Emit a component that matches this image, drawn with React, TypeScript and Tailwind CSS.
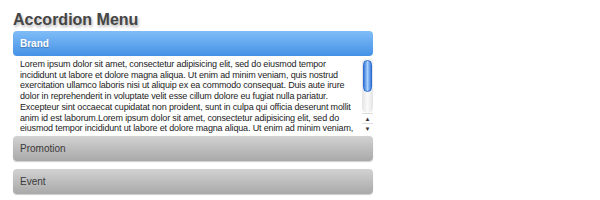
const lines = [
  "Lorem ipsum dolor sit amet, consectetur adipisicing elit, sed do eiusmod tempor",
  "incididunt ut labore et dolore magna aliqua. Ut enim ad minim veniam, quis nostrud",
  "exercitation ullamco laboris nisi ut aliquip ex ea commodo consequat. Duis aute irure",
  "dolor in reprehenderit in voluptate velit esse cillum dolore eu fugiat nulla pariatur.",
  "Excepteur sint occaecat cupidatat non proident, sunt in culpa qui officia deserunt mollit",
  "anim id est laborum.Lorem ipsum dolor sit amet, consectetur adipisicing elit, sed do",
  "eiusmod tempor incididunt ut labore et dolore magna aliqua. Ut enim ad minim veniam,",
];

function ScrollBar() {
  return (
    <div className="flex w-[11px] shrink-0 flex-col bg-white">
      <div className="flex flex-1 flex-col rounded-full bg-gradient-to-r from-[#e4e4e4] via-[#fafafa] to-[#e4e4e4] px-px pt-[2px]">
        <div className="h-[32px] rounded-full border border-[#2d6fd0] bg-gradient-to-r from-[#3b7be0] via-[#a9d0fb] to-[#3b7be0]" />
      </div>
      <div className="flex h-[10px] items-center justify-center border-t border-[#ddd] text-[6px] leading-none text-[#333]">▲</div>
      <div className="flex h-[10px] items-center justify-center border-t border-[#ddd] text-[6px] leading-none text-[#333]">▼</div>
    </div>
  );
}

function Header({ label, active }: { label: string; active?: boolean }) {
  return (
    <div
      className={
        active
          ? "flex h-[25px] items-center rounded-[4px] bg-gradient-to-b from-[#80bdf7] to-[#4491e6] px-[7px] text-[10px] font-bold text-white [text-shadow:0_1px_1px_rgba(0,0,0,0.25)]"
          : "flex h-[25px] items-center rounded-[4px] bg-gradient-to-b from-[#d2d2d2] to-[#a9a9a9] px-[7px] text-[10px] text-[#3a3a3a] shadow-[0_1px_1px_rgba(0,0,0,0.2)]"
      }
    >
      {label}
    </div>
  );
}

export default function App() {
  return (
    <div className="h-[200px] w-[600px] bg-white pl-[13px] font-['Liberation_Sans',Arial,sans-serif]">
      <h1 className="pt-[9px] text-[16px] font-bold leading-[21px] text-[#454545] [text-shadow:1px_2px_3px_rgba(0,0,0,0.3)]">
        Accordion Menu
      </h1>
      <div className="mt-px w-[360px]">
        <Header label="Brand" active />
        <div className="mt-[2px] flex h-[75px] pl-[7px]">
          <div className="flex-1 overflow-hidden pr-[3px] pt-px text-[9px] leading-[10.7px] tracking-[-0.15px] text-[#222]">
            {lines.map((line) => (
              <div key={line} className="whitespace-nowrap">
                {line}
              </div>
            ))}
          </div>
          <ScrollBar />
        </div>
        <div className="mt-[3px] flex flex-col gap-[8px]">
          <Header label="Promotion" />
          <Header label="Event" />
        </div>
      </div>
    </div>
  );
}
